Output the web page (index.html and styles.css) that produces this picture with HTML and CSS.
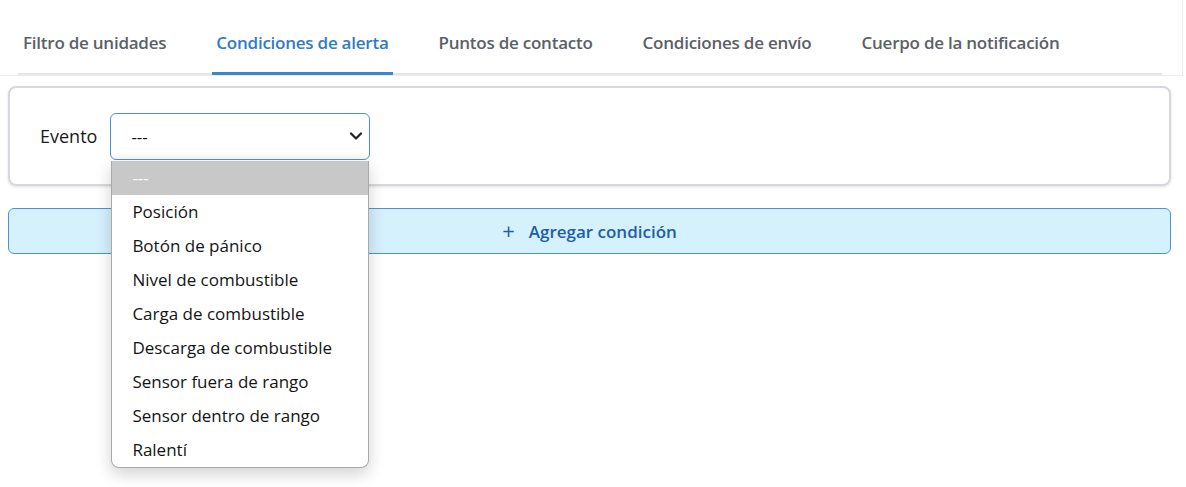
FILE: index.html
```html
<!DOCTYPE html>
<html lang="es">
<head>
<meta charset="utf-8">
<title>Condiciones de alerta</title>
<link rel="stylesheet" href="styles.css">
</head>
<body>
<div class="page">
  <header class="header">
    <nav class="tabs">
      <div class="tab">Filtro de unidades</div>
      <div class="tab active">Condiciones de alerta</div>
      <div class="tab">Puntos de contacto</div>
      <div class="tab">Condiciones de envío</div>
      <div class="tab">Cuerpo de la notificación</div>
    </nav>
  </header>
  <main class="content">
    <section class="card">
      <label class="label">Evento</label>
      <div class="select-wrap">
        <div class="select">
          <span class="select-value">---</span>
          <svg class="chevron" width="14" height="10" viewBox="0 0 14 10"><path d="M2 2.5 L7 7.5 L12 2.5" fill="none" stroke="#222" stroke-width="2.2" stroke-linecap="round" stroke-linejoin="round"/></svg>
        </div>
        <ul class="options">
          <li class="option selected">---</li>
          <li class="option">Posición</li>
          <li class="option">Botón de pánico</li>
          <li class="option">Nivel de combustible</li>
          <li class="option">Carga de combustible</li>
          <li class="option">Descarga de combustible</li>
          <li class="option">Sensor fuera de rango</li>
          <li class="option">Sensor dentro de rango</li>
          <li class="option">Ralentí</li>
        </ul>
      </div>
    </section>
    <button class="add-btn"><span class="plus">+</span>Agregar condición</button>
  </main>
</div>
</body>
</html>
```
FILE: styles.css
```css
* { box-sizing: border-box; }
html, body { margin: 0; padding: 0; background: #fff; }
body {
  font-family: "Open Sans", "Noto Sans", "Liberation Sans", sans-serif;
  color: #1e1e1e;
}
.page { width: 1183px; min-height: 487px; }
.header {
  height: 76px;
  border-right: 1px solid #ececec;
  border-bottom: 1px solid #ececec;
  padding: 0 20px 0 18px;
}
.tabs {
  display: flex;
  gap: 42px;
  height: 75px;
  border-bottom: 2px solid #e4e5e9;
  padding-left: 1px;
}
.tab {
  padding: 12px 4px 0;
  display: flex;
  align-items: center;
  height: 75px;
  font-size: 17px;
  font-weight: 600;
  color: #5b6067;
  letter-spacing: -0.24px;
  white-space: nowrap;
  border-bottom: 3px solid transparent;
  margin-bottom: -2px;
}
.tab.active {
  color: #2f7cc5;
  border-bottom-color: #3a87d1;
}
.content {
  padding: 10px 12px 0 8px;
}
.card {
  display: flex;
  align-items: center;
  gap: 13px;
  height: 100px;
  border: 2px solid #d6d8dd;
  border-radius: 8px;
  padding: 0 0 0 30px;
  box-shadow: 0 1px 3px rgba(0,0,0,0.12);
}
.label {
  font-size: 18px;
  color: #1a1a1a;
}
.select-wrap {
  position: relative;
}
.select {
  width: 260px;
  height: 47px;
  border: 1px solid #4a90d6;
  border-radius: 6px;
  display: flex;
  align-items: center;
  justify-content: space-between;
  padding: 0 6px 0 20px;
  background: #fff;
  box-shadow: inset 0 -6px 8px -6px rgba(0,0,0,0.06);
}
.select-value { font-size: 17px; color: #111; }
.options {
  position: absolute;
  top: 48px;
  left: 1px;
  width: 258px;
  margin: 0;
  padding: 0;
  list-style: none;
  background: #fff;
  border: 1px solid #a9a9a9;
  border-top: none;
  border-radius: 0 0 8px 8px;
  box-shadow: 0 6px 16px rgba(0,0,0,0.18);
  overflow: hidden;
  z-index: 10;
}
.option {
  height: 34px;
  line-height: 34px;
  padding-left: 20px;
  font-size: 17px;
  color: #141414;
  white-space: nowrap;
}
.option.selected {
  background: #c8c8c8;
  color: #fff;
}
.add-btn {
  margin-top: 22px;
  width: 100%;
  height: 46px;
  display: flex;
  align-items: center;
  justify-content: center;
  gap: 14px;
  background: #d4f1fd;
  border: 1px solid #4a93df;
  border-radius: 6px;
  font-family: inherit;
  font-size: 17px;
  font-weight: 600;
  color: #1e5ea8;
  padding: 0;
}
.plus {
  font-size: 22px;
  font-weight: 400;
  line-height: 1;
  margin-top: -3px;
}
```
